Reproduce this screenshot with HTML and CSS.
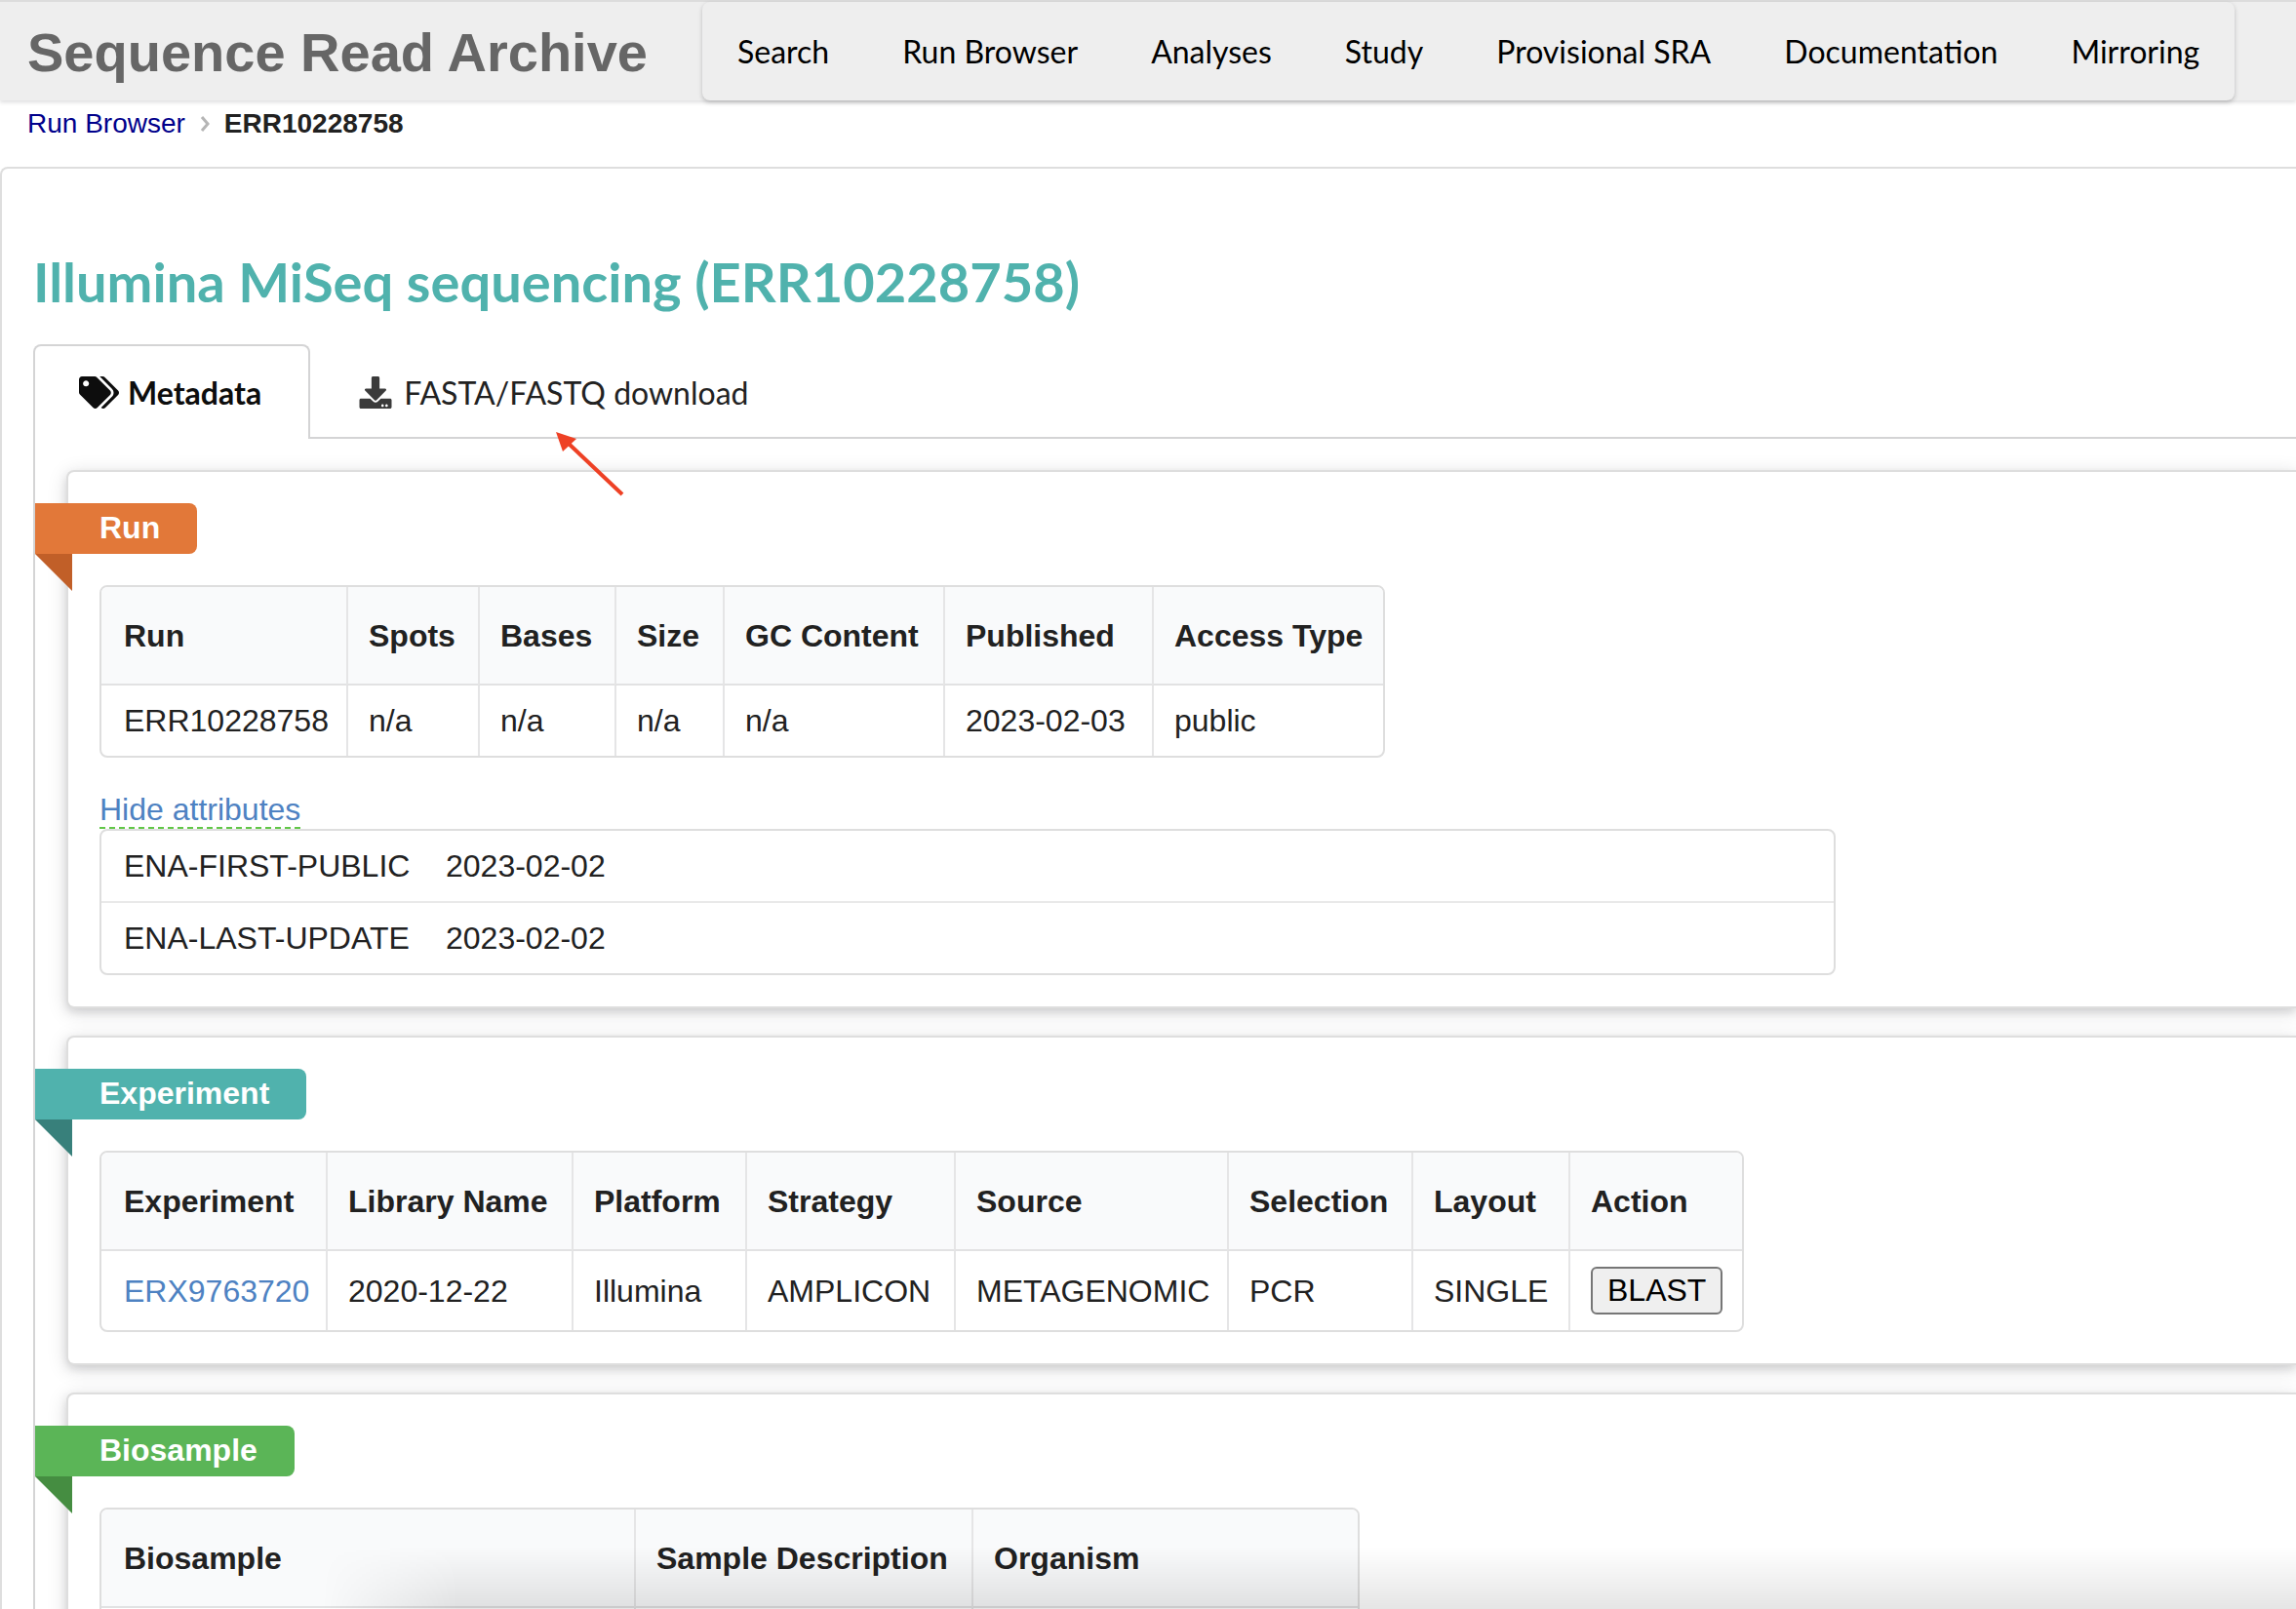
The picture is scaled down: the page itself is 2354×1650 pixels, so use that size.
FILE: index.html
```html
<!DOCTYPE html>
<html lang="en">
<head>
<meta charset="utf-8">
<meta name="viewport" content="width=device-width, initial-scale=1">
<title>ERR10228758 - Sequence Read Archive</title>
<link rel="stylesheet" href="styles.css">
</head>
<body>
<header class="site-header">
  <div class="site-title">Sequence Read Archive</div>
  <nav class="site-nav">
    <a href="#">Search</a>
    <a href="#">Run Browser</a>
    <a href="#">Analyses</a>
    <a href="#">Study</a>
    <a href="#">Provisional SRA</a>
    <a href="#">Documentation</a>
    <a href="#">Mirroring</a>
  </nav>
</header>

<nav class="breadcrumb" aria-label="Breadcrumb">
  <a href="#">Run Browser</a>
  <svg class="chevron" viewBox="0 0 10 16" aria-hidden="true"><path d="M2 1l6 7-6 7"/></svg>
  <strong>ERR10228758</strong>
</nav>

<main class="page">
  <h1>Illumina MiSeq sequencing (ERR10228758)</h1>

  <div class="tabs">
    <a class="tab active" href="#metadata">
      <svg class="icon-tags" viewBox="0 0 640 512" aria-hidden="true"><path d="M497.941 225.941L286.059 14.059A48 48 0 0 0 252.118 0H48C21.49 0 0 21.49 0 48v204.118a48 48 0 0 0 14.059 33.941l211.882 211.882c18.744 18.745 49.136 18.746 67.882 0l204.118-204.118c18.745-18.745 18.745-49.137 0-67.882zM112 160c-26.51 0-48-21.49-48-48s21.49-48 48-48 48 21.49 48 48-21.49 48-48 48zm513.941 133.823L421.823 497.941c-18.745 18.745-49.137 18.745-67.882 0l-.36-.36L527.64 323.522c16.999-16.999 26.36-39.6 26.36-63.64s-9.362-46.641-26.36-63.64L331.397 0h48.721a48 48 0 0 1 33.941 14.059l211.882 211.882c18.745 18.745 18.745 49.137 0 67.882z"/></svg>
      <span>Metadata</span>
    </a>
    <a class="tab" href="#download">
      <svg class="icon-download" viewBox="0 0 512 512" aria-hidden="true"><path d="M216 0h80c13.300 0 24 10.700 24 24v168h87.700c17.800 0 26.700 21.500 14.100 34.100L269.700 378.300c-7.500 7.500-19.800 7.500-27.300 0L90.100 226.100c-12.600-12.600-3.700-34.100 14.100-34.100H192V24c0-13.300 10.700-24 24-24zm296 376v112c0 13.300-10.700 24-24 24H24c-13.300 0-24-10.700-24-24V376c0-13.300 10.700-24 24-24h146.700l49 49c20.100 20.100 52.500 20.100 72.600 0l49-49H488c13.300 0 24 10.700 24 24zm-124 88c0-11-9-20-20-20s-20 9-20 20 9 20 20 20 20-9 20-20zm64 0c0-11-9-20-20-20s-20 9-20 20 9 20 20 20 20-9 20-20z"/></svg>
      <span>FASTA/FASTQ download</span>
      <svg class="pointer-arrow" viewBox="0 0 72 68" aria-hidden="true"><path class="head" d="M1 1L22 8L8 21Z"/><path class="shaft" d="M13 12L69 65"/></svg>
    </a>
  </div>

  <div class="tab-panel">
    <section class="segment">
      <h2 class="ribbon orange">Run</h2>
      <table class="grid runs">
        <colgroup><col class="w-251"><col class="w-135"><col class="w-140"><col class="w-111"><col class="w-226"><col class="w-214"><col class="w-237"></colgroup>
        <thead>
          <tr><th>Run</th><th>Spots</th><th>Bases</th><th>Size</th><th>GC Content</th><th>Published</th><th>Access Type</th></tr>
        </thead>
        <tbody>
          <tr><td>ERR10228758</td><td>n/a</td><td>n/a</td><td>n/a</td><td>n/a</td><td>2023-02-03</td><td>public</td></tr>
        </tbody>
      </table>
      <a class="toggle" href="#">Hide attributes</a>
      <table class="grid attributes">
        <tbody>
          <tr><td>ENA-FIRST-PUBLIC</td><td>2023-02-02</td></tr>
          <tr><td>ENA-LAST-UPDATE</td><td>2023-02-02</td></tr>
        </tbody>
      </table>
    </section>

    <section class="segment">
      <h2 class="ribbon teal">Experiment</h2>
      <table class="grid experiments">
        <colgroup><col class="w-230"><col class="w-252"><col class="w-178"><col class="w-214"><col class="w-280"><col class="w-189"><col class="w-161"><col class="w-178"></colgroup>
        <thead>
          <tr><th>Experiment</th><th>Library Name</th><th>Platform</th><th>Strategy</th><th>Source</th><th>Selection</th><th>Layout</th><th>Action</th></tr>
        </thead>
        <tbody>
          <tr><td><a href="#">ERX9763720</a></td><td>2020-12-22</td><td>Illumina</td><td>AMPLICON</td><td>METAGENOMIC</td><td>PCR</td><td>SINGLE</td><td><button type="button">BLAST</button></td></tr>
        </tbody>
      </table>
    </section>

    <section class="segment">
      <h2 class="ribbon green">Biosample</h2>
      <table class="grid biosamples">
        <colgroup><col class="w-546"><col class="w-346"><col class="w-396"></colgroup>
        <thead>
          <tr><th>Biosample</th><th>Sample Description</th><th>Organism</th></tr>
        </thead>
        <tbody>
          <tr><td></td><td></td><td></td></tr>
        </tbody>
      </table>
    </section>
  </div>
</main>
<div class="bottom-shade"></div>
</body>
</html>
```

FILE: styles.css
```css
* {
  box-sizing: border-box;
}

html {
  scrollbar-width: none;
}

body {
  margin: 0;
  overflow-x: hidden;
  background: #fff;
  color: #212121;
  font-family: "Liberation Sans", Arial, sans-serif;
  font-size: 32px;
  line-height: 36px;
}

a {
  color: #4e82c2;
  text-decoration: none;
}

/* Header */
.site-header {
  display: flex;
  align-items: stretch;
  height: 103px;
  padding-left: 28px;
  border-top: 2px solid #dcdcdc;
  background: #eee;
  box-shadow: 0 2px 4px rgba(34, 36, 38, 0.15);
}

.site-title {
  width: 692px;
  color: #666;
  font-size: 56px;
  font-weight: bold;
  line-height: 104px;
  white-space: nowrap;
}

.site-nav {
  display: flex;
  gap: 3px;
  border-radius: 8px;
  box-shadow: 0 2px 4px rgba(34, 36, 38, 0.25);
}

.site-nav a {
  padding: 0 36px;
  color: #000;
  font-family: Lato, sans-serif;
  line-height: 102px;
  white-space: nowrap;
}

/* Breadcrumb */
.breadcrumb {
  display: flex;
  align-items: center;
  gap: 15px;
  height: 48px;
  padding-left: 28px;
  font-size: 28px;
}

.breadcrumb a {
  color: #00008b;
}

.chevron {
  width: 10px;
  height: 16px;
  fill: none;
  stroke: #b5b5b5;
  stroke-width: 3;
}

/* Page body */
.page {
  margin-top: 20px;
  padding: 80px 0 0 32px;
  border: solid #dedede;
  border-width: 2px 0 0 2px;
  border-radius: 8px 0 0 0;
}

h1 {
  margin: 0 0 28px;
  color: #50b2ad;
  font-family: Lato, sans-serif;
  font-size: 56px;
  font-weight: bold;
  line-height: 72px;
}

/* Tabs */
.tabs {
  display: flex;
  height: 97px;
  border-bottom: 2px solid #d4d4d5;
  font-family: Lato, sans-serif;
}

.tab {
  position: relative;
  display: flex;
  align-items: center;
  gap: 12px;
  height: 97px;
  padding: 2px 48px 0 50px;
  color: #222;
}

.tab.active {
  gap: 9px;
  padding: 0 48px 0 45px;
  border: 2px solid #d4d4d5;
  border-bottom: 0;
  border-radius: 8px 8px 0 0;
  background: #fff;
  color: #0d0d0d;
  font-weight: bold;
}

.icon-tags {
  width: 41px;
  height: 33px;
  fill: #0d0d0d;
}

.icon-download {
  width: 34px;
  height: 33px;
  fill: #3b3b3b;
}

.pointer-arrow {
  position: absolute;
  top: 89px;
  left: 251px;
  width: 72px;
  height: 68px;
}

.pointer-arrow .head {
  fill: #ee4125;
}

.pointer-arrow .shaft {
  stroke: #ee4125;
  stroke-width: 4;
}

.tab-panel {
  padding: 32px 0 0 32px;
  border-left: 2px solid #d4d4d5;
}

/* Segments */
.segment {
  margin-bottom: 28px;
  padding: 32px 0 32px 32px;
  border: 2px solid #dedede;
  border-right: 0;
  border-radius: 8px 0 0 8px;
  background: #fff;
  box-shadow: 0 4px 8px rgba(34, 36, 38, 0.12), 0 4px 20px rgba(34, 36, 38, 0.15);
}

.ribbon {
  position: relative;
  width: max-content;
  height: 52px;
  margin: 0 0 32px -66px;
  padding: 0 38px 0 66px;
  border-radius: 0 8px 8px 0;
  color: #fff;
  font-size: 32px;
  line-height: 50px;
}

.ribbon::after {
  content: "";
  position: absolute;
  top: 100%;
  left: 0;
  width: 38px;
  height: 38px;
  clip-path: polygon(0 0, 100% 0, 100% 100%);
}

.orange {
  background: #e27839;
}

.orange::after {
  background: #c15f28;
}

.teal {
  background: #50b2ad;
}

.teal::after {
  background: #38807b;
}

.green {
  background: #5bb557;
}

.green::after {
  background: #458d41;
}

/* Tables */
.grid {
  table-layout: fixed;
  border: 2px solid #dedede;
  border-radius: 8px;
  border-spacing: 0;
  text-align: left;
  white-space: nowrap;
}

.runs {
  width: 1318px;
}

.experiments {
  width: 1686px;
}

.biosamples {
  width: 1292px;
}

.attributes {
  width: 100%;
  max-width: 1780px;
}

.grid th,
.grid td {
  padding: 18px 0 18px 21px;
  border-left: 2px solid #e5e5e6;
}

.grid th {
  height: 101px;
  border-bottom: 2px solid #e2e2e3;
  background: #f9fafb;
}

.grid th:first-child,
.grid td:first-child {
  padding-left: 23px;
  border-left: 0;
}

.grid th:first-child {
  border-top-left-radius: 6px;
}

.grid th:last-child {
  border-top-right-radius: 6px;
}

.grid.experiments td {
  padding-top: 16px;
  padding-bottom: 16px;
}

.grid.attributes td {
  border-left: 0;
}

.attributes td:first-child {
  width: 332px;
}

.attributes tr + tr td {
  border-top: 2px solid #e9e9e9;
}

.w-111 { width: 111px; }
.w-135 { width: 135px; }
.w-140 { width: 140px; }
.w-161 { width: 161px; }
.w-178 { width: 178px; }
.w-189 { width: 189px; }
.w-214 { width: 214px; }
.w-226 { width: 226px; }
.w-230 { width: 230px; }
.w-237 { width: 237px; }
.w-251 { width: 251px; }
.w-252 { width: 252px; }
.w-280 { width: 280px; }
.w-346 { width: 346px; }
.w-396 { width: 396px; }
.w-546 { width: 546px; }

.toggle {
  display: block;
  width: max-content;
  margin-top: 35px;
  border-bottom: 2px dashed #62c748;
}

button {
  display: block;
  height: 49px;
  padding: 0 15px 2px;
  border: 2px solid #767676;
  border-radius: 6px;
  background: #efefef;
  color: #000;
  font: inherit;
}

/* Soft shade along the lower edge of the window */
.bottom-shade {
  position: fixed;
  right: 0;
  bottom: 0;
  left: 14%;
  height: 64px;
  background: linear-gradient(transparent, rgba(0, 0, 0, 0.1));
  mask-image: linear-gradient(90deg, transparent, #000 140px);
  pointer-events: none;
}
```
